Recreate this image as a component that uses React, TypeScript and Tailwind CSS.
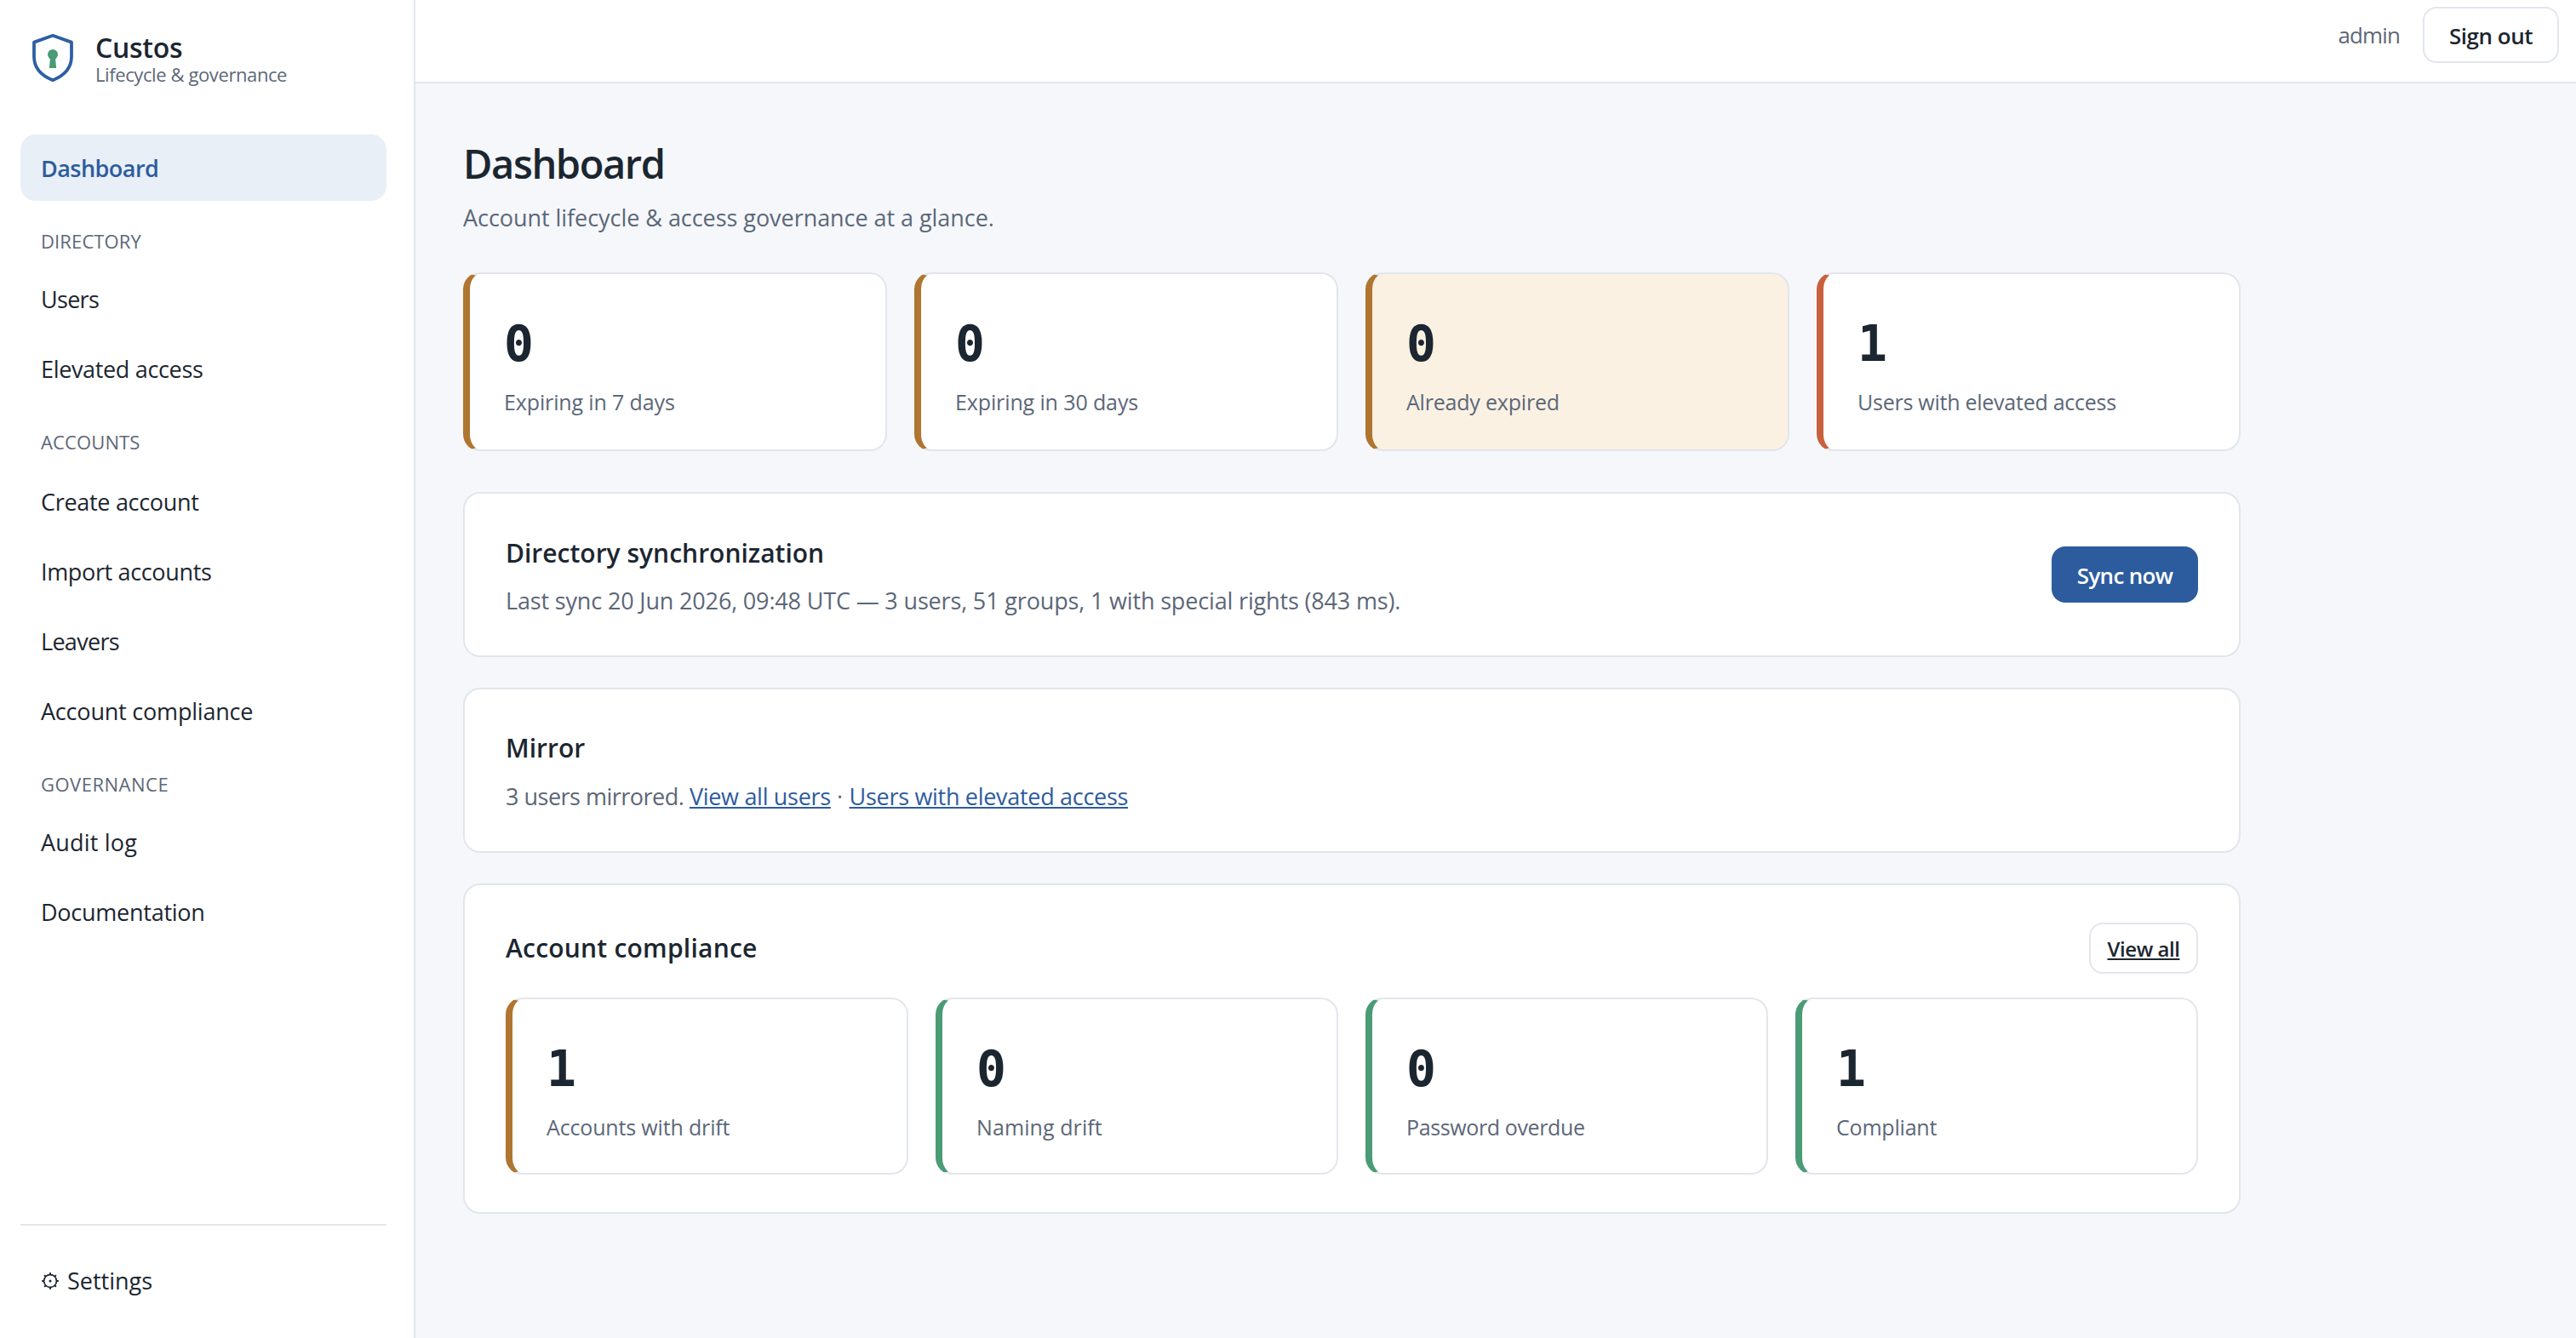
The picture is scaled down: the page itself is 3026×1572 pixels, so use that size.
import type { ReactNode } from "react";

function ShieldLogo() {
  return (
    <svg className="h-16 w-16 shrink-0" viewBox="0 0 64 64" fill="none">
      <path
        d="M32 5.8 L54 13.6 V30.5 C54 44 44.5 53.2 32 58.2 C19.5 53.2 10 44 10 30.5 V13.6 Z"
        stroke="#2d5fa3"
        strokeWidth="3.8"
        strokeLinejoin="round"
      />
      <circle cx="32" cy="28" r="6" fill="#4a9b76" />
      <path d="M29.2 30 H34.8 L36.2 44 H27.8 Z" fill="#4a9b76" />
    </svg>
  );
}

function GearIcon() {
  return (
    <svg className="h-[22px] w-[22px] shrink-0" viewBox="0 0 22 22" fill="none" stroke="#1c2630">
      <circle cx="11" cy="11" r="7.4" strokeWidth="1.7" />
      <circle cx="11" cy="11" r="1.5" fill="#1c2630" stroke="none" />
      <path
        d="M11 1.2v2M11 18.8v2M1.2 11h2M18.8 11h2M4.1 4.1l1.4 1.4M16.5 16.5l1.4 1.4M17.9 4.1l-1.4 1.4M5.5 16.5l-1.4 1.4"
        strokeWidth="2"
      />
    </svg>
  );
}

function NavItem({ active, tracking, children }: { active?: boolean; tracking: string; children: ReactNode }) {
  return (
    <a
      className={`flex h-[78px] items-center rounded-[18px] px-6 pt-0.5 text-[27px] ${tracking} ${
        active ? "bg-[#e8eff7] font-semibold text-[#2d5c9e]" : "text-[#1c2630]"
      }`}
    >
      {children}
    </a>
  );
}

function NavLabel({ className, children }: { className: string; children: ReactNode }) {
  return (
    <div className={`mt-8 px-6 text-[22px] leading-[30px] text-[#5c6778] uppercase ${className}`}>{children}</div>
  );
}

function StatCard({
  value,
  label,
  accent,
  tracking,
  size = "h-[210px]",
  bg = "bg-white",
}: {
  value: number;
  label: string;
  accent: string;
  tracking: string;
  size?: string;
  bg?: string;
}) {
  return (
    <div className={`rounded-[20px] border-2 border-l-8 border-[#e2e6ec] px-10 pt-[50px] ${accent} ${size} ${bg}`}>
      <div className="font-['DejaVu_Sans_Mono',monospace] text-[58px] leading-[64px] font-bold">{value}</div>
      <div className={`mt-[18px] text-[25px] leading-9 text-[#5c6778] ${tracking}`}>{label}</div>
    </div>
  );
}

const AMBER = "border-l-[#b07530]";
const RED = "border-l-[#c9603d]";
const GREEN = "border-l-[#4a9b76]";

export default function App() {
  return (
    <div className="flex h-[1572px] w-[3026px] overflow-hidden bg-[#f5f7fb] font-['Open_Sans',sans-serif] text-[#1c2630]">
      <aside className="flex w-[488px] shrink-0 flex-col border-r-2 border-[#e2e6ec] bg-white pr-8 pl-6">
        <div className="flex h-[158px] items-start pt-9 pl-1.5">
          <ShieldLogo />
          <div className="pl-[18px]">
            <div className="text-[32px] leading-10 font-semibold tracking-[-0.28px]">Custos</div>
            <div className="-mt-px text-[22px] leading-6 tracking-[-0.4px] text-[#5c6778]">Lifecycle &amp; governance</div>
          </div>
        </div>
        <nav className="flex flex-col">
          <NavItem active tracking="tracking-[-0.54px]">Dashboard</NavItem>
          <NavLabel className="mb-3.5 tracking-[0.12px]">Directory</NavLabel>
          <div className="flex flex-col gap-1">
            <NavItem tracking="tracking-[-0.7px]">Users</NavItem>
            <NavItem tracking="tracking-[-0.34px]">Elevated access</NavItem>
          </div>
          <NavLabel className="mb-4 tracking-[0.12px]">Accounts</NavLabel>
          <div className="flex flex-col gap-1">
            <NavItem tracking="tracking-[-0.3px]">Create account</NavItem>
            <NavItem tracking="tracking-[-0.35px]">Import accounts</NavItem>
            <NavItem tracking="tracking-[-0.7px]">Leavers</NavItem>
            <NavItem tracking="tracking-[-0.2px]">Account compliance</NavItem>
          </div>
          <NavLabel className="mb-3.5 tracking-[0.5px]">Governance</NavLabel>
          <div className="flex flex-col gap-1">
            <NavItem tracking="tracking-[0.2px]">Audit log</NavItem>
            <NavItem tracking="tracking-[-0.25px]">Documentation</NavItem>
          </div>
        </nav>
        <div className="mt-auto mb-[29px] border-t-2 border-[#e2e6ec] pt-[25px]">
          <NavItem tracking="tracking-normal">
            <GearIcon />
            <span className="pl-[9px]">Settings</span>
          </NavItem>
        </div>
      </aside>

      <div className="flex min-w-0 flex-1 flex-col">
        <header className="flex h-[98px] shrink-0 items-start justify-end border-b-2 border-[#e2e6ec] bg-white pt-2 pr-5">
          <span className="mr-[27px] text-[26px] leading-[67px] tracking-[-0.9px] text-[#5c6778]">admin</span>
          <button className="flex h-[66px] w-40 items-center justify-center rounded-[16px] border-2 border-[#e2e6ec] bg-white pt-0.5 text-[26px] font-semibold tracking-[-0.5px]">
            Sign out
          </button>
        </header>

        <main className="w-[2200px] px-14 pt-16">
          <h1 className="text-[47px] leading-[60px] font-semibold tracking-[-1.4px]">Dashboard</h1>
          <p className="mt-3.5 text-[27px] leading-10 tracking-[-0.05px] text-[#5c6778]">
            Account lifecycle &amp; access governance at a glance.
          </p>

          <div className="mt-11 grid grid-cols-4 gap-8">
            <StatCard value={0} label="Expiring in 7 days" accent={AMBER} tracking="tracking-[-0.13px]" />
            <StatCard value={0} label="Expiring in 30 days" accent={AMBER} tracking="tracking-[-0.12px]" />
            <StatCard value={0} label="Already expired" accent={AMBER} tracking="tracking-[-0.2px]" bg="bg-[#faf1e3]" />
            <StatCard value={1} label="Users with elevated access" accent={RED} tracking="tracking-[-0.25px]" />
          </div>

          <section className="mt-12 flex h-[194px] items-center justify-between rounded-[20px] border-2 border-[#e2e6ec] bg-white px-12">
            <div className="pt-1.5">
              <h2 className="text-[30px] leading-10 font-semibold">Directory synchronization</h2>
              <p className="mt-4 text-[27px] leading-10 tracking-[-0.16px] text-[#5c6778]">
                Last sync 20 Jun 2026, 09:48 UTC — 3 users, 51 groups, 1 with special rights (843 ms).
              </p>
            </div>
            <button className="flex h-[66px] w-[172px] items-center justify-center rounded-[16px] bg-[#2d5c9e] pt-0.5 text-[26px] font-semibold tracking-[-0.7px] text-white">
              Sync now
            </button>
          </section>

          <section className="mt-9 h-[194px] rounded-[20px] border-2 border-[#e2e6ec] bg-white px-12 pt-[49px]">
            <h2 className="text-[30px] leading-10 font-semibold">Mirror</h2>
            <p className="mt-[17px] text-[27px] leading-10 tracking-[-0.3px] text-[#5c6778]">
              <span className="tracking-[-0.5px]">3 users mirrored. </span>
              <a className="text-[#2d5c9e] underline decoration-2 underline-offset-2">View all users</a>
              <span className="tracking-[0.2px]"> · </span>
              <a className="text-[#2d5c9e] underline decoration-2 underline-offset-2">Users with elevated access</a>
            </p>
          </section>

          <section className="mt-9 h-[388px] rounded-[20px] border-2 border-[#e2e6ec] bg-white px-12 pt-11">
            <div className="flex items-center justify-between">
              <h2 className="text-[30px] leading-10 font-semibold tracking-[0.22px]">Account compliance</h2>
              <a className="flex h-[60px] w-32 items-center justify-center rounded-[16px] border-2 border-[#e2e6ec] pt-px text-[24px] font-semibold tracking-[-0.46px] underline decoration-2 underline-offset-2">
                View all
              </a>
            </div>
            <div className="mt-7 grid grid-cols-4 gap-8">
              <StatCard value={1} label="Accounts with drift" accent={AMBER} tracking="tracking-[-0.16px]" size="h-[208px]" />
              <StatCard value={0} label="Naming drift" accent={GREEN} tracking="tracking-[0.09px]" size="h-[208px]" />
              <StatCard value={0} label="Password overdue" accent={GREEN} tracking="tracking-[-0.38px]" size="h-[208px]" />
              <StatCard value={1} label="Compliant" accent={GREEN} tracking="tracking-[-0.2px]" size="h-[208px]" />
            </div>
          </section>
        </main>
      </div>
    </div>
  );
}
